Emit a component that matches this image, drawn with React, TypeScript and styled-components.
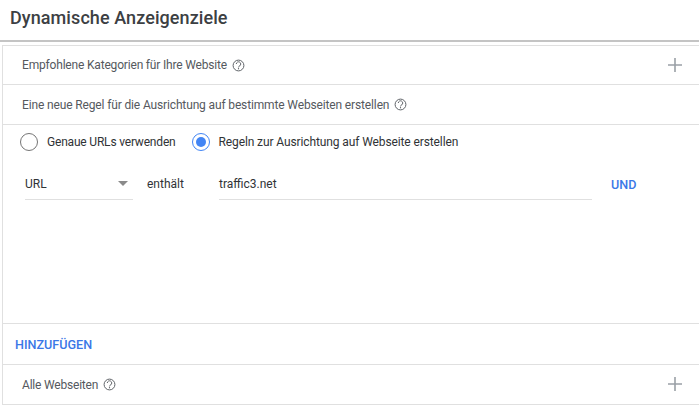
import React from "react";
import styled, { createGlobalStyle } from "styled-components";

const GlobalStyle = createGlobalStyle`
  html, body {
    margin: 0;
    padding: 0;
    background: #fff;
  }
  body {
    font-family: Roboto, "Liberation Sans", sans-serif;
    overflow: hidden;
  }
`;

const Page = styled.div`
  width: 699px;
  height: 416px;
  background: #fff;
`;

const Header = styled.header`
  height: 42px;
  box-sizing: border-box;
  padding: 6px 0 0 10px;
  border-bottom: 2px solid #c4c4c4;
`;

const Title = styled.h1`
  margin: 0;
  font-size: 18px;
  line-height: 24px;
  font-weight: 500;
  letter-spacing: 0.08px;
  color: #3c4043;
`;

const Card = styled.section`
  margin: 3px 0 0 2px;
  height: 360px;
  box-sizing: border-box;
  display: flex;
  flex-direction: column;
  border-top: 1px solid #e0e0e0;
  border-left: 1px solid #e0e0e0;
  border-bottom: 1px solid #e0e0e0;
`;

const Row = styled.div<{ $height?: number; $last?: boolean }>`
  height: ${(p) => p.$height ?? 40}px;
  flex: none;
  box-sizing: border-box;
  display: flex;
  align-items: center;
  padding: 0 17px 0 19px;
  border-bottom: ${(p) => (p.$last ? "0" : "1px solid #e0e0e0")};
  font-size: 12px;
  color: #55595e;
`;

const RowLabel = styled.span<{ $tracking: number }>`
  flex: 1;
  display: flex;
  align-items: center;
  gap: 5px;
  letter-spacing: ${(p) => p.$tracking}px;
`;

const Editor = styled.div`
  flex: 1;
  display: flex;
  flex-direction: column;
  border-bottom: 1px solid #e0e0e0;
  padding: 8px 0 0 17px;
`;

const RadioGroup = styled.div`
  display: flex;
  align-items: center;
  gap: 16px;
`;

const RadioOption = styled.label<{ $tracking: number }>`
  display: flex;
  align-items: center;
  gap: 9px;
  font-size: 12px;
  letter-spacing: ${(p) => p.$tracking}px;
  color: #303336;
`;

const RadioCircle = styled.span<{ $checked?: boolean }>`
  width: 18px;
  height: 18px;
  box-sizing: border-box;
  flex: none;
  border-radius: 50%;
  border: 1.5px solid ${(p) => (p.$checked ? "#4285f4" : "#757575")};
  display: flex;
  align-items: center;
  justify-content: center;
  &::after {
    content: "";
    display: ${(p) => (p.$checked ? "block" : "none")};
    width: 10px;
    height: 10px;
    border-radius: 50%;
    background: #4285f4;
  }
`;

const RuleRow = styled.div`
  display: flex;
  align-items: stretch;
  margin: 17px 0 0 5px;
  height: 32px;
`;

const Field = styled.div<{ $width: number }>`
  width: ${(p) => p.$width}px;
  box-sizing: border-box;
  display: flex;
  align-items: center;
  justify-content: space-between;
  padding-right: 5px;
  border-bottom: 1px solid #e0e0e0;
  font-size: 12px;
  color: #303336;
`;

const Caret = styled.span`
  width: 0;
  height: 0;
  border-left: 5px solid transparent;
  border-right: 5px solid transparent;
  border-top: 5px solid #8a8a8a;
`;

const Operator = styled.div`
  width: 86px;
  padding-left: 14px;
  box-sizing: border-box;
  display: flex;
  align-items: center;
  font-size: 12px;
  color: #303336;
`;

const LinkButton = styled.button<{ $ml?: number }>`
  margin: 0 0 0 ${(p) => p.$ml ?? 0}px;
  padding: 0;
  border: 0;
  background: none;
  font-family: inherit;
  font-size: 12.6px;
  font-weight: 500;
  color: #3b78e7;
`;

const AddRow = styled.div`
  height: 41px;
  flex: none;
  box-sizing: border-box;
  display: flex;
  align-items: center;
  padding-left: 12px;
  border-bottom: 1px solid #e0e0e0;
`;

const PlusSvg = styled.svg`
  margin-top: -1px;
`;

const HelpIcon = () => (
  <svg width="13" height="13" viewBox="0 0 13 13" fill="none" stroke="#5f6368">
    <circle cx="6.5" cy="6.5" r="5.4" strokeWidth="1" />
    <path d="M4.3 5a2.2 2.2 0 1 1 3.5 1.8c-.8.5-1.3.8-1.3 1.6" strokeWidth="1" />
    <path d="M6.5 9.1v1.2" strokeWidth="1.1" />
  </svg>
);

const PlusIcon = () => (
  <PlusSvg width="14" height="14" viewBox="0 0 14 14" stroke="#9aa0a6" strokeWidth="1.6">
    <path d="M7 0v14M0 7h14" />
  </PlusSvg>
);

export default function App() {
  return (
    <Page>
      <GlobalStyle />
      <Header>
        <Title>Dynamische Anzeigenziele</Title>
      </Header>
      <Card>
        <Row $height={39}>
          <RowLabel $tracking={-0.18}>
            Empfohlene Kategorien für Ihre Website <HelpIcon />
          </RowLabel>
          <PlusIcon />
        </Row>
        <Row>
          <RowLabel $tracking={-0.14}>
            Eine neue Regel für die Ausrichtung auf bestimmte Webseiten erstellen <HelpIcon />
          </RowLabel>
        </Row>
        <Editor>
          <RadioGroup>
            <RadioOption $tracking={-0.19}>
              <RadioCircle />
              Genaue URLs verwenden
            </RadioOption>
            <RadioOption $tracking={-0.11}>
              <RadioCircle $checked />
              Regeln zur Ausrichtung auf Webseite erstellen
            </RadioOption>
          </RadioGroup>
          <RuleRow>
            <Field $width={108}>
              URL
              <Caret />
            </Field>
            <Operator>enthält</Operator>
            <Field $width={373}>traffic3.net</Field>
            <LinkButton $ml={19}>UND</LinkButton>
          </RuleRow>
        </Editor>
        <AddRow>
          <LinkButton>HINZUFÜGEN</LinkButton>
        </AddRow>
        <Row $height={39} $last>
          <RowLabel $tracking={-0.2}>
            Alle Webseiten <HelpIcon />
          </RowLabel>
          <PlusIcon />
        </Row>
      </Card>
    </Page>
  );
}
